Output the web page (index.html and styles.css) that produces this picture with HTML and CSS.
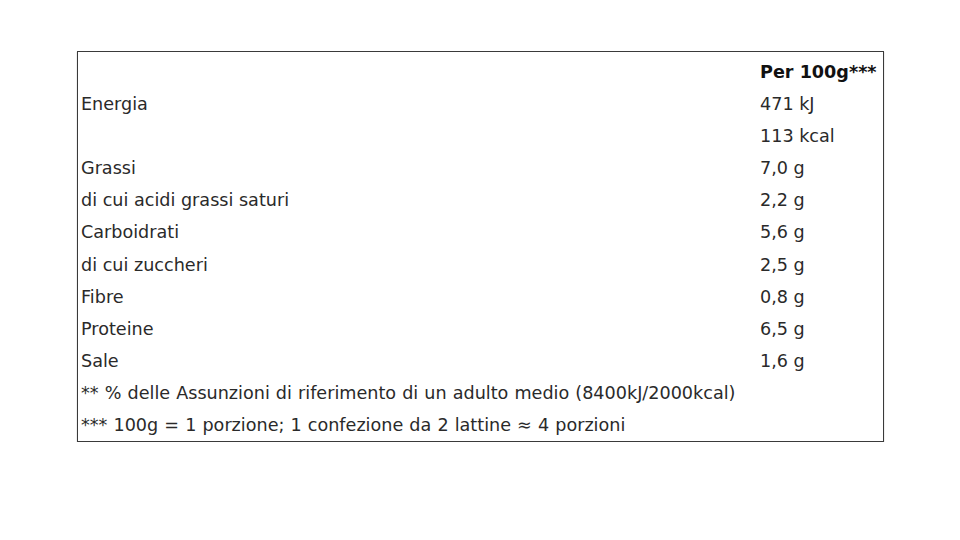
FILE: index.html
```html
<!DOCTYPE html>
<html lang="it">
<head>
<meta charset="utf-8">
<title>Valori nutrizionali</title>
<link rel="stylesheet" href="styles.css">
</head>
<body>
<div class="page">
  <table class="nutri">
    <tr class="head"><td></td><td class="val"><strong>Per 100g***</strong></td></tr>
    <tr><td>Energia</td><td class="val">471 kJ</td></tr>
    <tr><td></td><td class="val">113 kcal</td></tr>
    <tr><td>Grassi</td><td class="val">7,0 g</td></tr>
    <tr><td>di cui acidi grassi saturi</td><td class="val">2,2 g</td></tr>
    <tr><td>Carboidrati</td><td class="val">5,6 g</td></tr>
    <tr><td>di cui zuccheri</td><td class="val">2,5 g</td></tr>
    <tr><td>Fibre</td><td class="val">0,8 g</td></tr>
    <tr><td>Proteine</td><td class="val">6,5 g</td></tr>
    <tr><td>Sale</td><td class="val">1,6 g</td></tr>
    <tr><td colspan="2">** % delle Assunzioni di riferimento di un adulto medio (8400kJ/2000kcal)</td></tr>
    <tr><td colspan="2">*** 100g = 1 porzione; 1 confezione da 2 lattine ≈ 4 porzioni</td></tr>
  </table>
</div>
</body>
</html>
```
FILE: styles.css
```css
html, body {
  margin: 0;
  padding: 0;
  background: #ffffff;
}
.page {
  padding: 51px 0 0 77px;
  font-family: "DejaVu Sans", sans-serif;
  font-size: 17.6px;
  color: #2a2a2a;
}
.nutri {
  width: 807px;
  border-collapse: collapse;
  border: 1px solid #3a3a3a;
  box-shadow: 0 1px 1px rgba(0,0,0,0.35);
}
.nutri td {
  height: 32.1px;
  padding: 0 3px;
  line-height: 20px;
  vertical-align: middle;
  white-space: nowrap;
}
.nutri tr.head td {
  height: 33px;
  padding-top: 3px;
}
.nutri td.val {
  width: 120px;
}
.nutri td[colspan] {
  word-spacing: 0.5px;
}
.nutri strong {
  font-weight: bold;
  color: #111;
}
```
